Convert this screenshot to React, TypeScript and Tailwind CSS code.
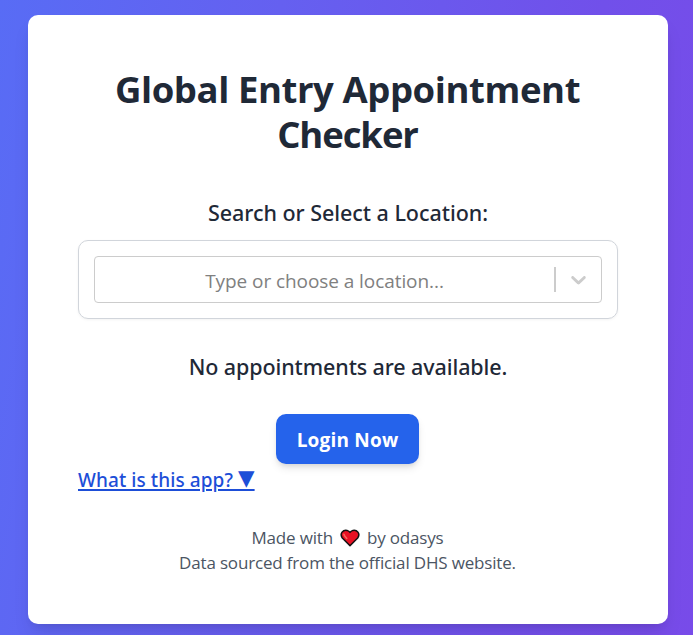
export default function App() {
  return (
    <div className="h-[635px] w-[693px] overflow-hidden bg-[linear-gradient(100deg,#586cf5_0%,#6560f0_35%,#7150ea_75%,#784be9_100%)] pt-[15px] pl-7 font-['Open_Sans','Noto_Sans',sans-serif]">
      <main className="flex h-[609px] w-[640px] flex-col rounded-[10px] bg-white px-[50px] pt-[52px] text-center text-gray-800 shadow-[0_12px_19px_-4px_rgba(0,0,0,0.1),0_5px_8px_-5px_rgba(0,0,0,0.1)]">
        <h1 className="flex flex-col items-center pr-px text-[36.5px] leading-[45px] font-bold whitespace-nowrap text-[#1f2937]">
          <span className="block h-[45px] tracking-[-0.42px]">Global Entry Appointment</span>
          <span className="block h-[45px] tracking-[-1.1px]">Checker</span>
        </h1>
        <label className="mt-[38px] h-[35px] text-[21.5px] leading-[35px] font-medium tracking-[-0.04px] whitespace-nowrap text-[#1f2937]">
          <span className="font-['Noto_Sans',sans-serif]">Search or Select a Location:</span>
        </label>
        <div className="mt-[10px] h-[79px] shrink-0 rounded-[10px] border border-[#d1d5db] p-[15px] shadow-[0_1px_3px_rgba(0,0,0,0.05)]">
          <div className="flex h-[47px] items-center rounded-[4px] border border-[#cccccc]">
            <div className="flex-1 pt-[2px] text-[19px] leading-[30px] tracking-[-0.07px] whitespace-nowrap text-[#808080]">
              <span>Type or choose a location...</span>
            </div>
            <span className="h-[25px] w-[2px] bg-[#cccccc]" />
            <span className="flex w-[45px] justify-center">
              <svg width="25" height="25" viewBox="0 0 20 20" fill="#cccccc">
                <path d="M4.516 7.548c0.436-0.446 1.043-0.481 1.576 0l3.908 3.747 3.908-3.747c0.533-0.481 1.141-0.446 1.574 0 0.436 0.445 0.408 1.197 0 1.615-0.406 0.418-4.695 4.502-4.695 4.502-0.217 0.223-0.502 0.335-0.787 0.335s-0.57-0.112-0.789-0.335c0 0-4.287-4.084-4.695-4.502s-0.436-1.17 0-1.615z" />
              </svg>
            </span>
          </div>
        </div>
        <p className="mt-[30px] h-[35px] font-['Noto_Sans',sans-serif] text-[21.5px] leading-[35px] font-medium tracking-[-0.1px] whitespace-nowrap text-[#1f2937]">
          <span>No appointments are available.</span>
        </p>
        <button className="mt-[30px] mr-px h-[50px] w-[143px] shrink-0 self-center rounded-[10px] bg-[#2563eb] pt-[2px] text-[19px] leading-[30px] font-bold tracking-[0.2px] whitespace-nowrap text-white shadow-[0_5px_8px_-1px_rgba(0,0,0,0.1),0_3px_5px_-2px_rgba(0,0,0,0.1)]">
          Login Now
        </button>
        <button className="mt-[1px] h-[30px] self-start font-['Noto_Sans',sans-serif] text-[19px] leading-[30px] font-medium tracking-[0.08px] whitespace-nowrap text-[#1d4ed8] underline decoration-[1.5px] underline-offset-[2px]">
          What is this app? <span className="align-[2px] font-['DejaVu_Sans'] text-[21.5px] leading-none">▼</span>
        </button>
        <footer className="mt-[30px] pr-px text-[17px] leading-[25px] tracking-[-0.17px] whitespace-nowrap text-[#4b5563]">
          <p className="flex h-[25px] items-center justify-center">
            <span>Made with</span>
            <svg className="mx-[7px]" width="20" height="18" viewBox="0 0 20 18">
              <path d="M10 16.8 2.3 9C-.8 4.6 3.2.4 7.1 1.4 8.5 1.8 9.4 2.5 10 3.4c.6-.9 1.5-1.6 2.9-2 3.9-1 7.9 3.2 4.8 7.6Z" fill="#e81224" stroke="#111" strokeWidth="1.5" strokeLinejoin="round" />
              <path d="M3.9 5.2c.2 1.7 1.3 2.8 2.8 4.2" fill="none" stroke="#f4685c" strokeWidth="1.6" strokeLinecap="round" />
            </svg>
            <span>by odasys</span>
          </p>
          <p><span>Data sourced from the official DHS website.</span></p>
        </footer>
      </main>
    </div>
  );
}
